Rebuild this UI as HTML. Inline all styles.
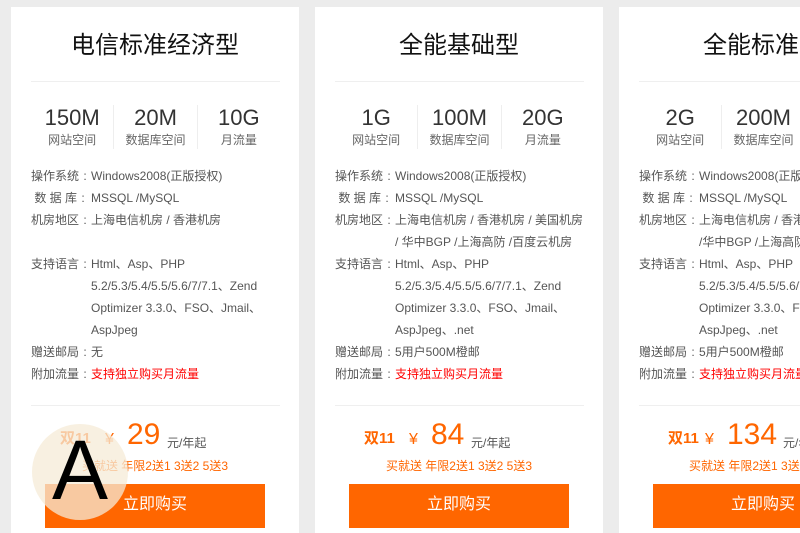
<!DOCTYPE html>
<html><head><meta charset="utf-8"><style>
*{margin:0;padding:0;box-sizing:border-box}
html,body{width:800px;height:533px;overflow:hidden}
body{background:#ececec;font-family:"Liberation Sans","Noto Sans CJK SC",sans-serif;position:relative}
.card{position:absolute;top:7px;width:288px;height:540px;background:#fff;overflow:hidden}
.title{position:absolute;top:18px;left:0;width:100%;text-align:center;font-size:24px;color:#111;white-space:nowrap}
.hr{position:absolute;left:20px;width:249px;height:1px;background:#efefef}
.stats{position:absolute;top:98px;left:20px;width:249px;display:flex}
.stats div{flex:1;text-align:center;border-left:1px solid #eee}
.stats div:first-child{border-left:none}
.stats b{display:block;font-weight:normal;font-size:22px;color:#333;line-height:26px}
.stats span{display:block;font-size:12px;color:#666;line-height:18px}
.spec{position:absolute;top:158px;left:20px;font-size:12px;color:#555;line-height:22px}
.spec .r{display:flex}
.spec .l{width:60px;flex:none;white-space:nowrap}
.spec .c{display:inline-block;width:12px;text-align:center}
.spec .v{width:196px}
.red{color:#f00}
.price{position:absolute;top:415px;left:0;width:100%;height:40px}
.s11{position:absolute;top:5px;font-size:15px;font-weight:bold;color:#f60}
.yen{position:absolute;top:9px;font-size:16px;color:#f60}
.num{position:absolute;top:-4px;font-size:30px;color:#f60}
.unit{position:absolute;top:12px;font-size:12px;color:#555;white-space:nowrap}
.gift{position:absolute;top:450px;width:100%;text-align:center;font-size:12px;color:#f60;white-space:nowrap}
.btn{position:absolute;top:477px;left:34px;width:220px;height:44px;background:#f60;color:#fff;font-size:16px;text-align:center;line-height:42px}
</style></head><body>

<div class="card" style="left:11px">
<div class="title">电信标准经济型</div>
<div class="hr" style="top:74px"></div>
<div class="stats"><div><b>150M</b><span>网站空间</span></div><div><b>20M</b><span>数据库空间</span></div><div><b>10G</b><span>月流量</span></div></div>
<div class="spec">
<div class="r"><span class="l">操作系统<span class="c">:</span></span><span class="v">Windows2008(正版授权)</span></div>
<div class="r"><span class="l">&nbsp;数 据 库<span class="c">:</span></span><span class="v">MSSQL /MySQL</span></div>
<div class="r"><span class="l">机房地区<span class="c">:</span></span><span class="v">上海电信机房 / 香港机房<br>&nbsp;</span></div>
<div class="r"><span class="l">支持语言<span class="c">:</span></span><span class="v">Html、Asp、PHP 5.2/5.3/5.4/5.5/5.6/7/7.1、Zend Optimizer 3.3.0、FSO、Jmail、AspJpeg</span></div>
<div class="r"><span class="l">赠送邮局<span class="c">:</span></span><span class="v">无</span></div>
<div class="r"><span class="l">附加流量<span class="c">:</span></span><span class="v red">支持独立购买月流量</span></div>
</div>
<div class="hr" style="top:398px"></div>
<div class="price"><span class="s11" style="left:49px">双11</span><span class="yen" style="left:94px">¥</span><span class="num" style="left:116px">29</span><span class="unit" style="left:156px">元/年起</span></div>
<div class="gift">买就送 年限2送1 3送2 5送3</div>
<div class="btn">立即购买</div>
</div>

<div class="card" style="left:315px">
<div class="title">全能基础型</div>
<div class="hr" style="top:74px"></div>
<div class="stats"><div><b>1G</b><span>网站空间</span></div><div><b>100M</b><span>数据库空间</span></div><div><b>20G</b><span>月流量</span></div></div>
<div class="spec">
<div class="r"><span class="l">操作系统<span class="c">:</span></span><span class="v">Windows2008(正版授权)</span></div>
<div class="r"><span class="l">&nbsp;数 据 库<span class="c">:</span></span><span class="v">MSSQL /MySQL</span></div>
<div class="r"><span class="l">机房地区<span class="c">:</span></span><span class="v">上海电信机房 / 香港机房 / 美国机房<br>/ 华中BGP /上海高防 /百度云机房</span></div>
<div class="r"><span class="l">支持语言<span class="c">:</span></span><span class="v">Html、Asp、PHP 5.2/5.3/5.4/5.5/5.6/7/7.1、Zend Optimizer 3.3.0、FSO、Jmail、AspJpeg、.net</span></div>
<div class="r"><span class="l">赠送邮局<span class="c">:</span></span><span class="v">5用户500M橙邮</span></div>
<div class="r"><span class="l">附加流量<span class="c">:</span></span><span class="v red">支持独立购买月流量</span></div>
</div>
<div class="hr" style="top:398px"></div>
<div class="price"><span class="s11" style="left:49px">双11</span><span class="yen" style="left:94px">¥</span><span class="num" style="left:116px">84</span><span class="unit" style="left:156px">元/年起</span></div>
<div class="gift">买就送 年限2送1 3送2 5送3</div>
<div class="btn">立即购买</div>
</div>

<div class="card" style="left:619px">
<div class="title" style="text-align:left;left:84px">全能标准型</div>
<div class="hr" style="top:74px"></div>
<div class="stats"><div><b>2G</b><span>网站空间</span></div><div><b>200M</b><span>数据库空间</span></div><div><b>40G</b><span>月流量</span></div></div>
<div class="spec">
<div class="r"><span class="l">操作系统<span class="c">:</span></span><span class="v">Windows2008(正版授权)</span></div>
<div class="r"><span class="l">&nbsp;数 据 库<span class="c">:</span></span><span class="v">MSSQL /MySQL</span></div>
<div class="r"><span class="l">机房地区<span class="c">:</span></span><span class="v">上海电信机房 / 香港机房<br>/华中BGP /上海高防</span></div>
<div class="r"><span class="l">支持语言<span class="c">:</span></span><span class="v">Html、Asp、PHP 5.2/5.3/5.4/5.5/5.6/7/7.1、Zend Optimizer 3.3.0、FSO、Jmail、AspJpeg、.net</span></div>
<div class="r"><span class="l">赠送邮局<span class="c">:</span></span><span class="v">5用户500M橙邮</span></div>
<div class="r"><span class="l">附加流量<span class="c">:</span></span><span class="v red">支持独立购买月流量</span></div>
</div>
<div class="hr" style="top:398px"></div>
<div class="price"><span class="s11" style="left:49px">双11</span><span class="yen" style="left:86px">¥</span><span class="num" style="left:108px">134</span><span class="unit" style="left:164px">元/年起</span></div>
<div class="gift" style="text-align:left;left:70px">买就送 年限2送1 3送2 5送3</div>
<div class="btn">立即购买</div>
</div>

<div style="position:absolute;left:32px;top:424px;width:96px;height:96px;border-radius:50%;background:rgba(245,235,215,0.75)"></div>
<div style="position:absolute;left:52px;top:425px;font-size:84px;line-height:90px;color:#000;font-family:'Liberation Sans',sans-serif">A</div>
</body></html>
